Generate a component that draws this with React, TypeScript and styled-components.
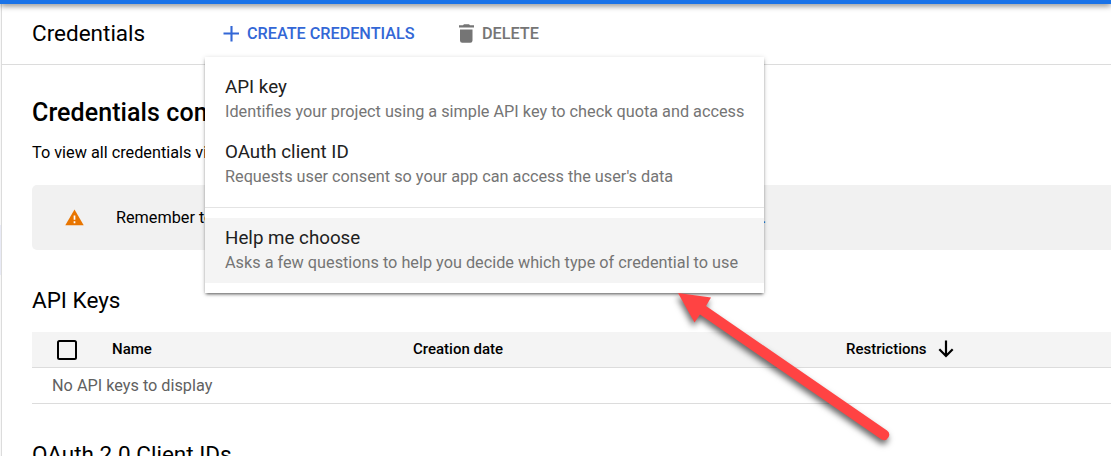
import React from "react";
import styled, { createGlobalStyle } from "styled-components";

const GlobalStyle = createGlobalStyle`
  * { box-sizing: border-box; }
  html, body { margin: 0; height: 456px; overflow: hidden; background: #fff; }
  body { font-family: Roboto, "Liberation Sans", sans-serif; color: #000; }
`;

const Page = styled.div`
  position: relative;
  display: flex;
  flex-direction: column;
  width: 1111px;
  height: 456px;
  overflow: hidden;
`;

const TopStrip = styled.div`
  flex: none;
  height: 4px;
  background: #1a73e8;
  box-shadow: 0 1px 6px rgba(0, 0, 0, 0.7);
  z-index: 1;
`;

const Body = styled.div`
  flex: 1;
  display: flex;
  min-height: 0;
`;

const NavEdge = styled.div`
  flex: none;
  width: 2px;
  background: linear-gradient(#f8f8f8 0 221px, #e8eaf6 221px 271px, #f8f8f8 271px);
  border-right: 1px solid #dcdcdc;
`;

const Main = styled.main`
  flex: 1;
  min-width: 0;
  display: flex;
  flex-direction: column;
`;

const Toolbar = styled.header`
  flex: none;
  display: flex;
  align-items: center;
  height: 61px;
  padding: 0 0 2px 30px;
  border-bottom: 1px solid #dcdcdc;
`;

const PageTitle = styled.h1`
  margin: 0;
  width: 188px;
  font-size: 22.5px;
  font-weight: 400;
  line-height: 30px;
`;

const ToolButton = styled.button<{ $color: string; $width: number }>`
  display: flex;
  align-items: center;
  gap: 8px;
  width: ${(p) => p.$width}px;
  padding: 0;
  border: 0;
  background: none;
  font: 500 16.25px/24px Roboto, sans-serif;
  letter-spacing: -0.03px;
  color: ${(p) => p.$color};
  white-space: nowrap;
`;

const ToolLabel = styled.span`
  padding-top: 2px;
`;

const Content = styled.div`
  display: flex;
  flex-direction: column;
  padding-left: 30px;
  white-space: nowrap;
`;

const Heading = styled.h2`
  margin: 31px 0 0;
  font-size: 25px;
  font-weight: 500;
  line-height: 34px;
  letter-spacing: 0.08px;
`;

const Lead = styled.p`
  margin: 11px 0 0;
  font-size: 16.25px;
  line-height: 24px;
`;

const Notice = styled.div`
  display: flex;
  align-items: center;
  height: 65px;
  margin-top: 20px;
  padding-left: 33px;
  border-radius: 5px 0 0 5px;
  background: #f1f1f1;
  font-size: 16.25px;
`;

const NoticeText = styled.span`
  margin-left: 32px;
  letter-spacing: -0.015px;
`;

const NoticeLink = styled.span`
  color: #1967d2;
`;

const SectionTitle = styled.h3<{ $top: number }>`
  margin: ${(p) => p.$top}px 0 0;
  font-size: 22.5px;
  font-weight: 400;
  line-height: 30px;
`;

const HeadRow = styled.div`
  display: grid;
  grid-template-columns: 80px 301px 433px auto;
  align-items: center;
  height: 36px;
  margin-top: 17px;
  padding-bottom: 1px;
  border-bottom: 1px solid #dcdcdc;
  background: #f4f4f4;
  font-size: 15px;
  font-weight: 500;
`;

const Checkbox = styled.span`
  width: 20px;
  height: 20px;
  margin: 1px 0 0 25px;
  border: 2px solid #000;
  border-radius: 2.5px;
`;

const SortCell = styled.span`
  display: flex;
  align-items: center;
  gap: 11px;
`;

const EmptyRow = styled.div`
  height: 36px;
  padding-left: 20px;
  border-bottom: 1px solid #dcdcdc;
  font-size: 16.25px;
  line-height: 35px;
  color: #616161;
`;

const Menu = styled.div`
  position: absolute;
  left: 205px;
  top: 57px;
  width: 559px;
  height: 236px;
  padding: 10px 0;
  background: #fff;
  box-shadow: 0 2px 3px -1px rgba(0, 0, 0, 0.6), 0 1px 5px rgba(0, 0, 0, 0.16);
  z-index: 2;
`;

const MenuItem = styled.div<{ $active?: boolean }>`
  height: 65px;
  padding: 8px 20px 0;
  background: ${(p) => (p.$active ? "#f4f4f4" : "transparent")};
  white-space: nowrap;
`;

const MenuLabel = styled.div`
  font-size: 18.75px;
  line-height: 25px;
  color: #212121;
`;

const MenuHint = styled.div`
  font-size: 16.25px;
  line-height: 23px;
  color: #757575;
`;

const Divider = styled.div`
  height: 1px;
  margin: 10px 0;
  background: #e4e4e4;
`;

const Pointer = styled.svg`
  position: absolute;
  left: 660px;
  top: 280px;
  z-index: 3;
  filter: drop-shadow(-1px 4px 3px rgba(0, 0, 0, 0.6));
`;

const entries = [
  { label: "API key", hint: "Identifies your project using a simple API key to check quota and access" },
  { label: "OAuth client ID", hint: "Requests user consent so your app can access the user's data" },
];

export default function App() {
  return (
    <>
      <GlobalStyle />
      <Page>
        <TopStrip />
        <Body>
          <NavEdge />
          <Main>
            <Toolbar>
              <PageTitle>Credentials</PageTitle>
              <ToolButton $color="#3367d6" $width={238}>
                <svg width="19" height="18" viewBox="0 0 19 18">
                  <path d="M3.5 9.5H19M11.5 2v15.500" stroke="#3367d6" strokeWidth="2.100" />
                </svg>
                <ToolLabel>CREATE CREDENTIALS</ToolLabel>
              </ToolButton>
              <ToolButton $color="#757575" $width={90}>
                <svg width="16" height="19" viewBox="-1 0 16 19">
                  <path d="M1 5.500h12.500v11a2.200 2.200 0 0 1-2.200 2.200H3.200A2.200 2.200 0 0 1 1 16.500zM0 1.200h4L5 .2h5l1 1h4v2.300H0z" fill="#757575" />
                </svg>
                <ToolLabel>DELETE</ToolLabel>
              </ToolButton>
            </Toolbar>
            <Content>
              <Heading>Credentials compatible with this API</Heading>
              <Lead>To view all credentials visit Credentials in APIs &amp; Services</Lead>
              <Notice>
                <svg width="19" height="17" viewBox="0 0 19 17">
                  <path d="M9.500 .5L18.700 16.300H.3z" fill="#e87500" />
                  <path d="M9.500 6.500v4.300M9.500 12.200v2" stroke="#fff" strokeWidth="1.700" />
                </svg>
                <NoticeText>
                  Remember to configure the OAuth consent screen with information about your application
                  <NoticeLink>.</NoticeLink>
                </NoticeText>
              </Notice>
              <SectionTitle $top={35}>API Keys</SectionTitle>
              <HeadRow>
                <Checkbox />
                <span>Name</span>
                <span>Creation date</span>
                <SortCell>
                  Restrictions
                  <svg width="16" height="18" viewBox="0 0 16 18">
                    <path d="M8 .5v15M1.300 9.300L8 16l6.700-6.700" fill="none" stroke="#000" strokeWidth="2.200" />
                  </svg>
                </SortCell>
              </HeadRow>
              <EmptyRow>No API keys to display</EmptyRow>
              <SectionTitle $top={35}>OAuth 2.0 Client IDs</SectionTitle>
            </Content>
          </Main>
        </Body>
        <Menu>
          {entries.map((e) => (
            <MenuItem key={e.label}>
              <MenuLabel>{e.label}</MenuLabel>
              <MenuHint>{e.hint}</MenuHint>
            </MenuItem>
          ))}
          <Divider />
          <MenuItem $active>
            <MenuLabel>Help me choose</MenuLabel>
            <MenuHint>Asks a few questions to help you decide which type of credential to use</MenuHint>
          </MenuItem>
        </Menu>
        <Pointer width="250" height="176" viewBox="660 280 250 176">
          <path d="M678 293L711 297.500L706 306L887 430.500A5.300 5.300 0 0 1 881.500 439.500L700 314.500L694.500 322.500Z" fill="#ff4343" />
        </Pointer>
      </Page>
    </>
  );
}
